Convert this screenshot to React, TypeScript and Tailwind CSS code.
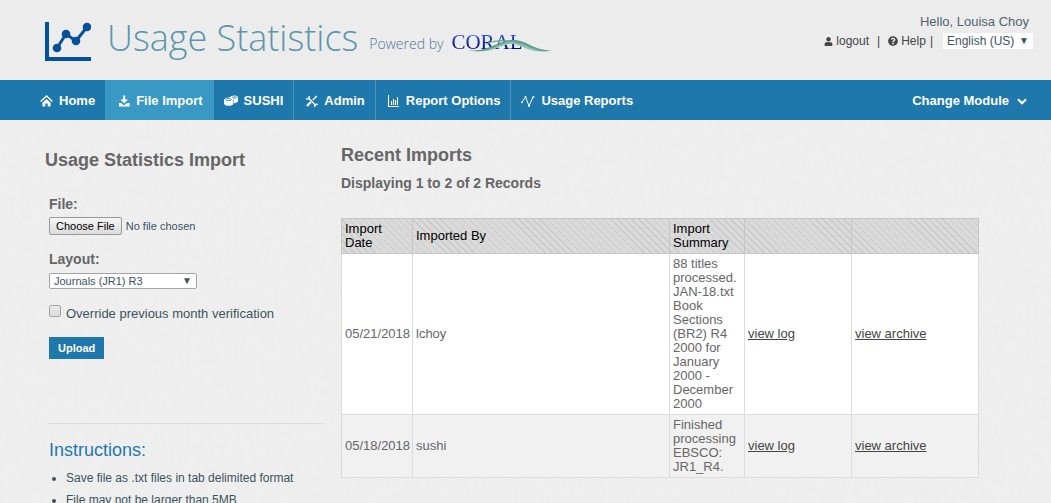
import type { ReactNode } from "react";
import { FaUser, FaQuestionCircle } from "react-icons/fa";

function ChartLogo() {
  return (
    <svg width="46" height="39" viewBox="0 0 46 39" aria-hidden="true" className="block">
      <path d="M2 0V37H46" fill="none" stroke="#04509a" strokeWidth="4" />
      <path d="M12 26L21 12L31 19L42 5" fill="none" stroke="#04509a" strokeWidth="3" />
      <g fill="#04509a">
        <circle cx="12" cy="26" r="4.3" />
        <circle cx="21" cy="12" r="4.3" />
        <circle cx="31" cy="19" r="4.3" />
        <circle cx="42" cy="5" r="4.3" />
      </g>
    </svg>
  );
}

function CoralLogo() {
  return (
    <span className="relative block w-[102px]">
      <span className="block bg-linear-to-b from-[#2a4fe0] from-20% to-[#06086c] to-80% bg-clip-text font-['Liberation_Serif',serif] text-[21px] leading-6 text-transparent">
        CORAL
      </span>
      <svg width="85" height="14" viewBox="0 0 85 14" aria-hidden="true" className="absolute top-[9px] left-[17px]">
        <path d="M0 11C12 13 22 8 32 4C44 -1 52 1 62 6C70 10 77 11.5 84 11.5C74 13.5 66 12 58 8C48 3 42 2.5 34 6C22 12 10 14 0 11Z" fill="#5fa08c" />
        <path d="M14 12.5C26 10 34 3 44 3C54 3 60 9 74 12.5C60 12.5 54 6 44 5C34 5 28 12 14 12.5Z" fill="#8fc4bd" />
        <path d="M18 5C30 0 44 1 58 6" fill="none" stroke="#6fa88c" strokeWidth="1.2" />
      </svg>
    </span>
  );
}

function NavSvg({ children }: { children: ReactNode }) {
  return (
    <svg width="14" height="14" viewBox="0 0 14 14" fill="none" stroke="currentColor" aria-hidden="true" className="shrink-0">
      {children}
    </svg>
  );
}

const homeIcon = (
  <NavSvg>
    <path d="M1.6 7.4L7.5 2L13.4 7.4" strokeWidth="1.4" />
    <path d="M3.4 8.8L7.5 5L11.6 8.8V12.6H8.7V9.4H6.3V12.6H3.4Z" fill="currentColor" stroke="none" />
  </NavSvg>
);

const importIcon = (
  <NavSvg>
    <g fill="currentColor" stroke="none">
      <path d="M7.2 1.4H9.2V5.4H12L8.2 9.2L4.4 5.4H7.2Z" />
      <path d="M3 9H5.2L8.2 11.4L11.2 9H13.6V12.6H3Z" />
    </g>
  </NavSvg>
);

const sushiIcon = (
  <NavSvg>
    <path d="M5.4 3.6Q7 1.4 10.6 1.4Q14 1.6 14 3.4V7.4Q13 9 9.4 9.2V9.8Q8.6 11.8 4.8 11.8Q0.6 11.6 0 9.4V5.4Q1.4 3.6 5.4 3.6Z" fill="currentColor" stroke="none" />
    <ellipse cx="4.6" cy="5.6" rx="3" ry="1" stroke="#1f78ab" strokeWidth="0.8" />
    <ellipse cx="10.6" cy="3.4" rx="2.2" ry="0.7" stroke="#1f78ab" strokeWidth="0.7" />
    <path d="M9.3 5.4V9.4" stroke="#1f78ab" strokeWidth="0.6" />
  </NavSvg>
);

const toolsIcon = (
  <NavSvg>
    <path d="M4 3.6L12 11.8" strokeWidth="1.4" />
    <path d="M12.8 2L8.8 6" strokeWidth="1.4" />
    <path d="M6.8 8L3 12" strokeWidth="2.2" />
    <path d="M2 4.4C3.4 5.8 5.8 5 5 2M13.8 10.4C11.6 9.6 10 11 10.8 13" strokeWidth="1.3" />
  </NavSvg>
);

const barsIcon = (
  <NavSvg>
    <path d="M2.5 1V12.5H13" strokeWidth="1.1" />
    <path d="M5.5 11V7M7.5 11V5M9.5 11V6M11.5 11V3" strokeWidth="1.1" />
  </NavSvg>
);

const pulseIcon = (
  <NavSvg>
    <path d="M1 8L4.6 3L8 12L12 3" strokeWidth="1" />
    <path d="M0 8.4H2M3.6 2.6H5.4M7 12H9M11.4 3H13.4" strokeWidth="1.4" />
  </NavSvg>
);

const navItems = [
  { label: "Home", icon: homeIcon, active: false },
  { label: "File Import", icon: importIcon, active: true },
  { label: "SUSHI", icon: sushiIcon, active: false },
  { label: "Admin", icon: toolsIcon, active: false },
  { label: "Report Options", icon: barsIcon, active: false },
  { label: "Usage Reports", icon: pulseIcon, active: false },
];

const imports = [
  {
    date: "05/21/2018",
    by: "lchoy",
    summary: "88 titles processed. JAN-18.txt Book Sections (BR2) R4 2000 for January 2000 - December 2000",
  },
  { date: "05/18/2018", by: "sushi", summary: "Finished processing EBSCO: JR1_R4." },
];

function Header() {
  return (
    <header className="flex h-20 items-start justify-between bg-[#ececec] pr-[18px] pl-[45px]">
      <div className="flex">
        <div className="pt-[22px]">
          <ChartLogo />
        </div>
        <h1 className="pt-3 pl-4 font-['Open_Sans',sans-serif] text-[36px] leading-[52px] font-light whitespace-nowrap text-[#5a97ad]">
          Usage Statistics
        </h1>
        <p className="pt-[34px] pl-[11px] font-['Open_Sans',sans-serif] text-[14px] leading-5 font-light whitespace-nowrap text-[#4f78a0]">
          Powered by
        </p>
        <div className="pt-[30px] pl-2">
          <CoralLogo />
        </div>
      </div>
      <div className="flex flex-col items-end pt-3 text-[#4f6470]">
        <p className="pr-1 text-[13px] leading-5">Hello, Louisa Choy</p>
        <div className="flex items-center text-[12px] leading-[18px] text-[#444]">
          <a href="#logout" className="flex items-center gap-[3px]">
            <FaUser size={9} /> logout
          </a>
          <span className="px-2">|</span>
          <a href="#help" className="flex items-center gap-[3px]">
            <FaQuestionCircle size={10} /> Help
          </a>
          <span className="pr-[10px] pl-1">|</span>
          <div className="grid w-[90px] items-center bg-white text-[#3d525e]">
            <select aria-label="Language" className="col-start-1 row-start-1 h-4 w-full appearance-none pl-1 text-[12px] leading-4">
              <option>English (US)</option>
            </select>
            <span aria-hidden="true" className="pointer-events-none col-start-1 row-start-1 justify-self-end pr-1 text-[10px] leading-4">
              ▼
            </span>
          </div>
        </div>
      </div>
    </header>
  );
}

function Nav() {
  return (
    <nav className="flex h-10 justify-between bg-[#1f78ab] pr-6 pl-[29px] text-[13px] font-bold text-white">
      <ul className="flex">
        {navItems.map((item) => (
          <li key={item.label} className="flex border-r border-[#4b94be] first:border-[#3998c4] last:border-r-0">
            <a
              href={"#" + item.label.toLowerCase().replace(" ", "-")}
              className={item.active ? "flex items-center gap-1.5 bg-[#3998c4] px-2.5 pt-0.5 whitespace-nowrap" : "flex items-center gap-1.5 px-2.5 pt-0.5 whitespace-nowrap"}
            >
              {item.icon}
              {item.label}
            </a>
          </li>
        ))}
      </ul>
      <button type="button" className="flex items-center gap-2 pt-0.5 font-bold">
        Change Module
        <svg width="10" height="7" viewBox="0 0 10 7" fill="none" stroke="currentColor" strokeWidth="2.2" aria-hidden="true">
          <path d="M1 1.2L5 5.2L9 1.2" />
        </svg>
      </button>
    </nav>
  );
}

function PaperTexture() {
  return (
    <svg aria-hidden="true" className="absolute inset-0 -z-10 h-full w-full">
      <filter id="paper">
        <feTurbulence type="fractalNoise" baseFrequency="0.2 0.09" numOctaves="3" seed="4" />
        <feColorMatrix values="0 0 0 0 0.5  0 0 0 0 0.5  0 0 0 0 0.5  0.09 0 0 0 -0.03" />
      </filter>
      <rect width="100%" height="100%" filter="url(#paper)" />
    </svg>
  );
}

function ImportForm() {
  return (
    <section className="w-[280px] shrink-0 pt-[29px] text-[#3d525e]">
      <h2 className="text-[18px] leading-[22px] font-bold text-[#666]">Usage Statistics Import</h2>
      <form className="flex flex-col items-start pt-6 pl-1">
        <label htmlFor="file" className="text-[14px] leading-[18px] font-bold text-[#666]">
          File:
        </label>
        <input
          id="file"
          type="file"
          className="mt-1 h-[18px] w-[240px] text-[11px] leading-4 file:mr-1 file:h-[18px] file:rounded-[2px] file:border file:border-solid file:border-[#999] file:bg-linear-to-b file:from-[#f6f6f6] file:to-[#dcdcdc] file:px-1.5 file:text-[11px] file:leading-4 file:text-black"
        />
        <label htmlFor="layout" className="mt-[15px] text-[14px] leading-[18px] font-bold text-[#666]">
          Layout:
        </label>
        <div className="mt-[5px] grid w-[148px] items-center rounded-[2px] border border-[#a5a5a5] bg-white">
          <select id="layout" className="col-start-1 row-start-1 h-[14px] w-full appearance-none pl-1 text-[11px] leading-[14px]">
            <option>Journals (JR1) R3</option>
          </select>
          <span aria-hidden="true" className="pointer-events-none col-start-1 row-start-1 justify-self-end pr-1 text-[10px] leading-[14px]">
            ▼
          </span>
        </div>
        <div className="mt-4 flex items-start gap-[5px]">
          <input
            id="override"
            type="checkbox"
            className="size-3 appearance-none rounded-[2px] border border-[#a5a5a5] bg-linear-to-b from-[#e9e9e9] to-[#dcdcdc]"
          />
          <label htmlFor="override" className="text-[13px] leading-[18px]">
            Override previous month verification
          </label>
        </div>
        <button type="button" className="mt-3.5 h-[22px] bg-[#1f78ab] px-[9px] text-[11px] font-bold text-white">
          Upload
        </button>
      </form>
      <div className="mt-16 mr-0.5 ml-1 border-t border-[#dcdcdc] pt-[15px]">
        <h3 className="text-[18px] leading-[22px] text-[#1f78ab]">Instructions:</h3>
        <ul className="list-disc pt-1.5 pl-[17px] text-[12px] leading-[22px]">
          <li>Save file as .txt files in tab delimited format</li>
          <li>File may not be larger than 5MB</li>
        </ul>
      </div>
    </section>
  );
}

function RecentImports() {
  return (
    <section className="w-[638px] pt-6 text-[#666]">
      <h2 className="text-[18px] leading-[22px] font-bold">Recent Imports</h2>
      <p className="pt-2 text-[14px] leading-[18px] font-bold">Displaying 1 to 2 of 2 Records</p>
      <table className="mt-[26px] w-full table-fixed border-collapse text-[13px] leading-[14px]">
        <colgroup>
          <col className="w-[71px]" />
          <col />
          <col className="w-[75px]" />
          <col className="w-[107px]" />
          <col className="w-[127px]" />
        </colgroup>
        <thead>
          <tr className="bg-[repeating-linear-gradient(45deg,#dadada_0px,#dadada_4px,#cacaca_4px,#cacaca_5px)] text-left text-black [&>th]:border [&>th]:border-[#c6c6c6] [&>th]:p-[3px] [&>th]:font-normal">
            <th>Import Date</th>
            <th>Imported By</th>
            <th>Import Summary</th>
            <th></th>
            <th></th>
          </tr>
        </thead>
        <tbody>
          {imports.map((row) => (
            <tr
              key={row.date}
              className="odd:bg-white even:bg-[#f1f1f1] [&>td]:border [&>td]:border-[#dcdcdf] [&>td]:py-[3px] [&>td]:pl-[3px]"
            >
              <td className="whitespace-nowrap">{row.date}</td>
              <td>{row.by}</td>
              <td>{row.summary}</td>
              <td>
                <a href="#log" className="text-[#444] underline">view log</a>
              </td>
              <td>
                <a href="#archive" className="text-[#444] underline">view archive</a>
              </td>
            </tr>
          ))}
        </tbody>
      </table>
    </section>
  );
}

export default function App() {
  return (
    <div className="flex min-h-screen flex-col font-['Liberation_Sans',Arial,sans-serif]">
      <Header />
      <Nav />
      <main className="relative isolate flex flex-1 gap-4 bg-[#efefef] pr-6 pb-4 pl-[45px]">
        <PaperTexture />
        <ImportForm />
        <RecentImports />
      </main>
    </div>
  );
}
